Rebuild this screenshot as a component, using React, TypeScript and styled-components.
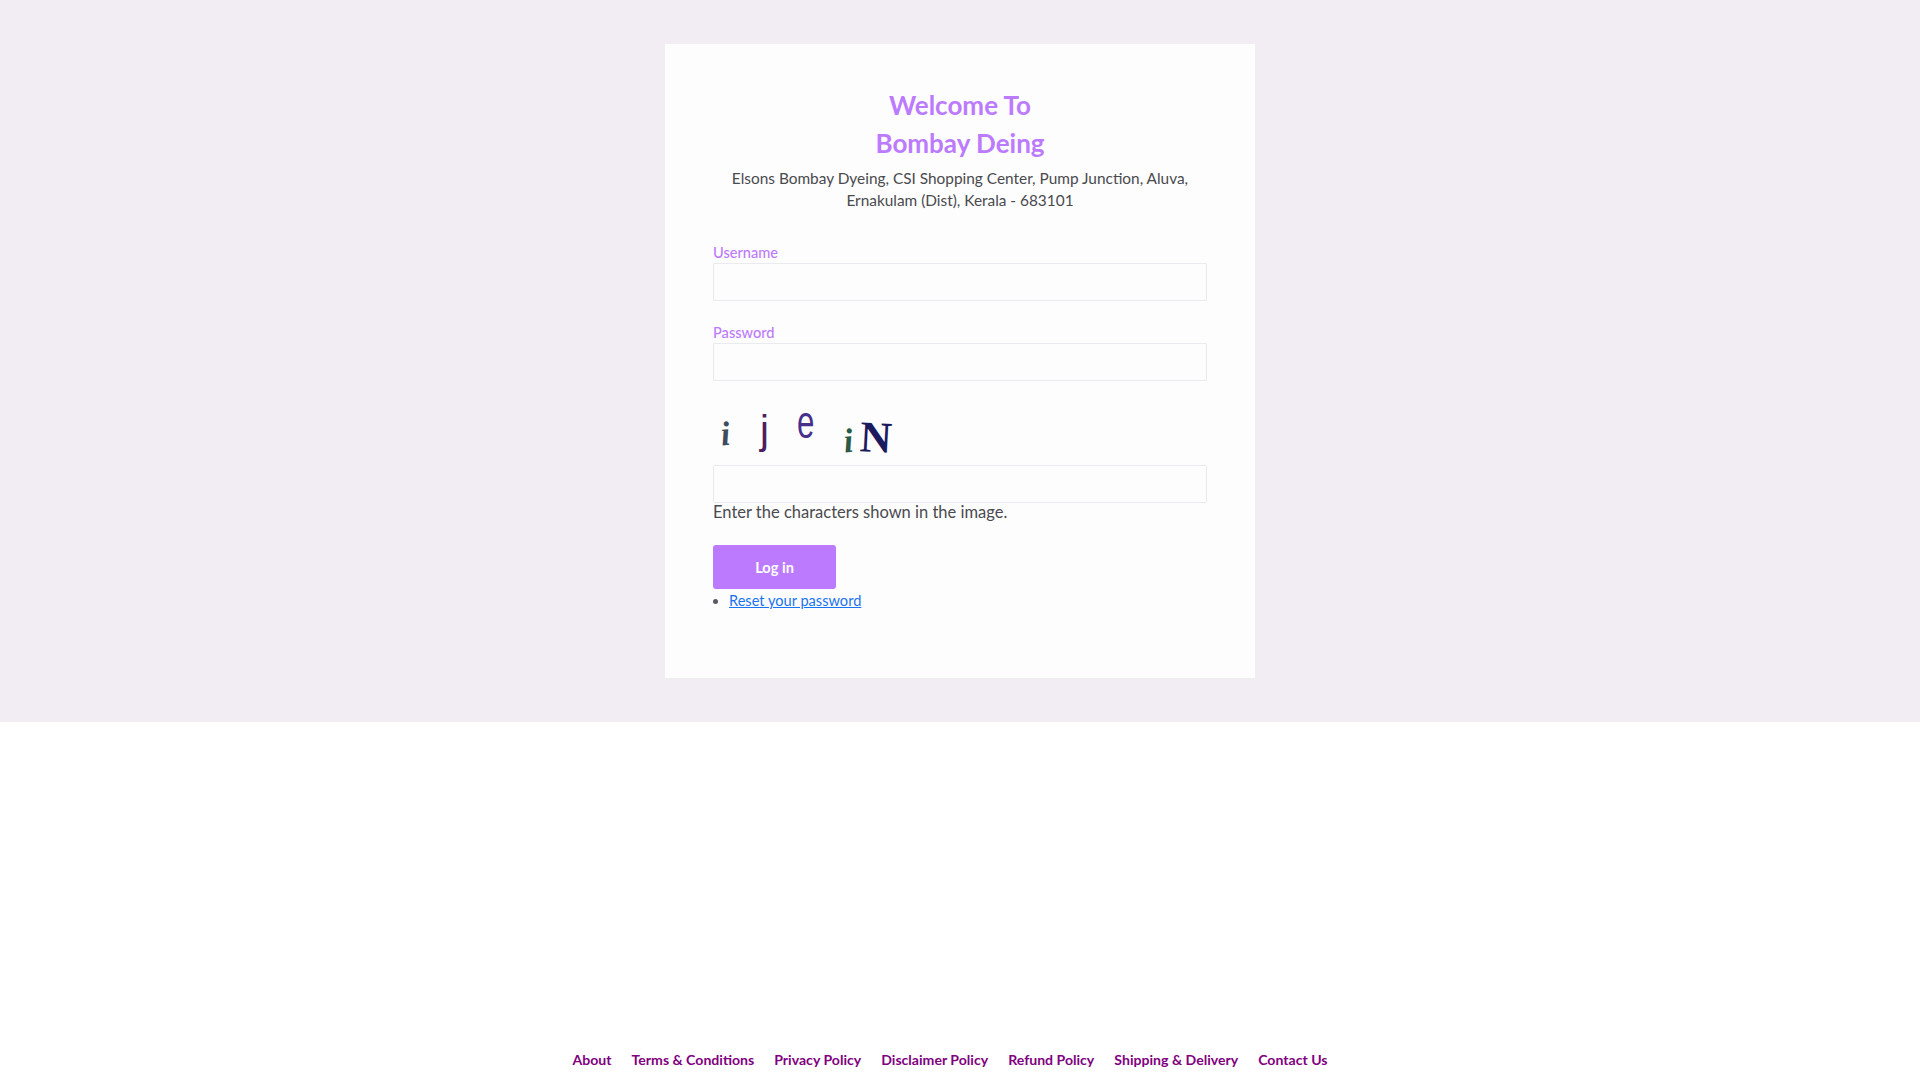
import styled, { createGlobalStyle } from 'styled-components'

const footerLinks = [
  'About',
  'Terms & Conditions',
  'Privacy Policy',
  'Disclaimer Policy',
  'Refund Policy',
  'Shipping & Delivery',
  'Contact Us',
]

const GlobalStyle = createGlobalStyle`
  html, body {
    margin: 0;
    padding: 0;
    background: #ffffff;
  }
  body {
    font-family: Lato, "Noto Sans", "Liberation Sans", sans-serif;
    color: #4a4a4f;
  }
`

const Page = styled.div`
  min-height: 1080px;
  display: flex;
  flex-direction: column;
  box-sizing: border-box;
`
const Band = styled.section`
  background: #f1edf3;
  padding: 44px 0;
  display: flex;
  justify-content: center;
`
const Card = styled.div`
  width: 590px;
  height: 634px;
  box-sizing: border-box;
  background: #fdfdfd;
  padding: 42px 48px 0;
`
const Title = styled.h1`
  margin: 0;
  font-size: 26px;
  line-height: 38px;
  font-weight: 700;
  color: #bc7bff;
  text-align: center;
`
const Address = styled.p`
  margin: 5px 0 0;
  font-size: 15.4px;
  line-height: 22px;
  text-align: center;
  color: #4a4a4f;
`
const Form = styled.form`
  margin-top: 32px;
`
const Field = styled.div`
  margin-bottom: 22px;
`
const Label = styled.label`
  display: block;
  font-size: 14.6px;
  line-height: 20px;
  font-weight: 500;
  color: #bc7bff;
`
const Input = styled.input`
  display: block;
  width: 100%;
  height: 38px;
  box-sizing: border-box;
  background: #fdfdfd;
  border: 1px solid #ebebef;
  border-radius: 1px;
  outline: none;
`
const Captcha = styled.svg`
  display: block;
  width: 190px;
  height: 60px;
  margin-bottom: 2px;
  overflow: visible;
`
const Help = styled.div`
  font-size: 16.5px;
  line-height: 19px;
  color: #4a4a4f;
`
const LoginButton = styled.button`
  display: block;
  width: 123px;
  height: 44px;
  margin-top: 23px;
  background: #bc7bff;
  border: none;
  border-radius: 3px;
  color: #fdfdfd;
  font-family: inherit;
  font-size: 14.6px;
  font-weight: 700;
`
const Links = styled.ul`
  margin: 1px 0 0;
  padding: 0 0 0 16px;
  font-size: 14.6px;
  line-height: 22px;
`
const LinkItem = styled.li`
  color: #5a5a60;
`
const ResetLink = styled.a`
  color: #1a73f0;
  text-decoration: underline;
`
const Footer = styled.footer`
  margin-top: auto;
  padding: 0 20px 10px 0;
  display: flex;
  justify-content: center;
  gap: 20px;
`
const FooterLink = styled.a`
  font-size: 14.1px;
  line-height: 20px;
  font-weight: 700;
  color: #800080;
  text-decoration: none;
`
const CaptchaChar = styled.text<{ $color: string }>`
  fill: ${(p) => p.$color};
`

function App() {
  return (
    <Page>
      <GlobalStyle />
      <Band>
        <Card>
          <Title>
            Welcome To
            <br />
            Bombay Deing
          </Title>
          <Address>
            Elsons Bombay Dyeing, CSI Shopping Center, Pump Junction, Aluva,
            <br />
            Ernakulam (Dist), Kerala - 683101
          </Address>
          <Form onSubmit={(e) => e.preventDefault()}>
            <Field>
              <Label>Username</Label>
              <Input type="text" />
            </Field>
            <Field>
              <Label>Password</Label>
              <Input type="password" />
            </Field>
            <Captcha viewBox="0 0 190 60">
              <CaptchaChar $color="#3f4c5e" x="8" y="42" fontFamily="Liberation Serif" fontStyle="italic" fontWeight="700" fontSize="34" transform="rotate(-6 14 35)">i</CaptchaChar>
              <CaptchaChar $color="#4b1f5e" x="47" y="41" fontFamily="Liberation Sans" fontSize="40">j</CaptchaChar>
              <CaptchaChar $color="#47308c" fontFamily="Liberation Sans" fontSize="46" transform="translate(84 35) scale(.68 1)">e</CaptchaChar>
              <CaptchaChar $color="#2a5a48" x="131" y="49" fontFamily="Liberation Serif" fontStyle="italic" fontWeight="700" fontSize="34" transform="rotate(-6 136 42)">i</CaptchaChar>
              <CaptchaChar $color="#1c1a5e" x="147" y="49" fontFamily="Liberation Serif" fontWeight="700" fontSize="44" transform="rotate(3 163 35)">N</CaptchaChar>
            </Captcha>
            <Input type="text" />
            <Help>Enter the characters shown in the image.</Help>
            <LoginButton type="submit">Log in</LoginButton>
            <Links>
              <LinkItem>
                <ResetLink href="#">Reset your password</ResetLink>
              </LinkItem>
            </Links>
          </Form>
        </Card>
      </Band>
      <Footer>
        {footerLinks.map((t) => (
          <FooterLink key={t} href="#">
            {t}
          </FooterLink>
        ))}
      </Footer>
    </Page>
  )
}

export default App
